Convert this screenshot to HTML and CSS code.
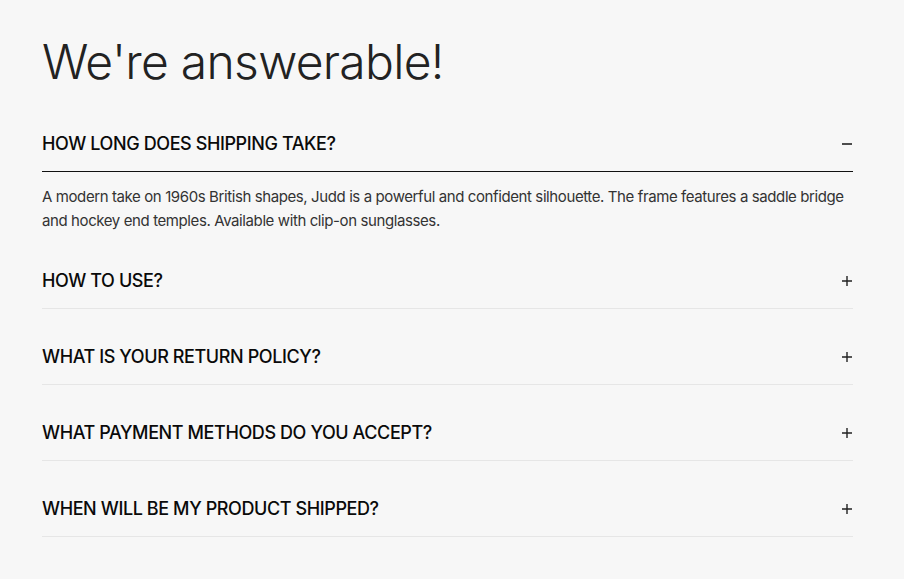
FILE: index.html
```html
<!DOCTYPE html>
<html lang="en">
<head>
<meta charset="utf-8">
<title>FAQ</title>
<link rel="stylesheet" href="styles.css">
</head>
<body>
<section class="faq">
  <h1 class="faq-title">We're answerable!</h1>
  <div class="faq-list">
    <div class="faq-item open">
      <div class="faq-q">
        <span>HOW LONG DOES SHIPPING TAKE?</span>
        <svg class="icon" width="10" height="10" viewBox="0 0 10 10"><path d="M0 5H10" stroke="#222" stroke-width="1.6"/></svg>
      </div>
      <p class="faq-a">A modern take on 1960s British shapes, Judd is a powerful and confident silhouette. The frame features a saddle bridge and hockey end temples. Available with clip-on sunglasses.</p>
    </div>
    <div class="faq-item">
      <div class="faq-q">
        <span>HOW TO USE?</span>
        <svg class="icon" width="10" height="10" viewBox="0 0 10 10"><path d="M0 5H10M5 0V10" stroke="#222" stroke-width="1.4"/></svg>
      </div>
    </div>
    <div class="faq-item">
      <div class="faq-q">
        <span>WHAT IS YOUR RETURN POLICY?</span>
        <svg class="icon" width="10" height="10" viewBox="0 0 10 10"><path d="M0 5H10M5 0V10" stroke="#222" stroke-width="1.4"/></svg>
      </div>
    </div>
    <div class="faq-item">
      <div class="faq-q">
        <span>WHAT PAYMENT METHODS DO YOU ACCEPT?</span>
        <svg class="icon" width="10" height="10" viewBox="0 0 10 10"><path d="M0 5H10M5 0V10" stroke="#222" stroke-width="1.4"/></svg>
      </div>
    </div>
    <div class="faq-item">
      <div class="faq-q">
        <span>WHEN WILL BE MY PRODUCT SHIPPED?</span>
        <svg class="icon" width="10" height="10" viewBox="0 0 10 10"><path d="M0 5H10M5 0V10" stroke="#222" stroke-width="1.4"/></svg>
      </div>
    </div>
  </div>
</section>
</body>
</html>
```
FILE: styles.css
```css
html, body {
  margin: 0;
  padding: 0;
  background: #f7f7f7;
}
body {
  font-family: Inter, "Noto Sans", sans-serif;
  color: #111;
}
.faq {
  width: 811px;
  padding: 33px 0 0 42px;
}
.faq-title {
  margin: 0;
  font-size: 48px;
  line-height: 58px;
  font-weight: 300;
  letter-spacing: -0.7px;
  color: #222;
}
.faq-q {
  display: flex;
  align-items: center;
  justify-content: space-between;
  padding: 36px 0 15px;
  line-height: 24px;
  font-size: 18px;
  font-weight: 500;
  letter-spacing: -0.4px;
  color: #0a0a0a;
  border-bottom: 1px solid #e6e6e6;
}
.faq-item:first-child .faq-q {
  padding-top: 41px;
}
.faq-item.open .faq-q {
  border-bottom-color: #111;
}
.icon {
  margin-right: 1px;
}
.faq-a {
  margin: 13px 0 0;
  font-size: 15px;
  line-height: 24px;
  color: #333;
  letter-spacing: -0.4px;
}
```
